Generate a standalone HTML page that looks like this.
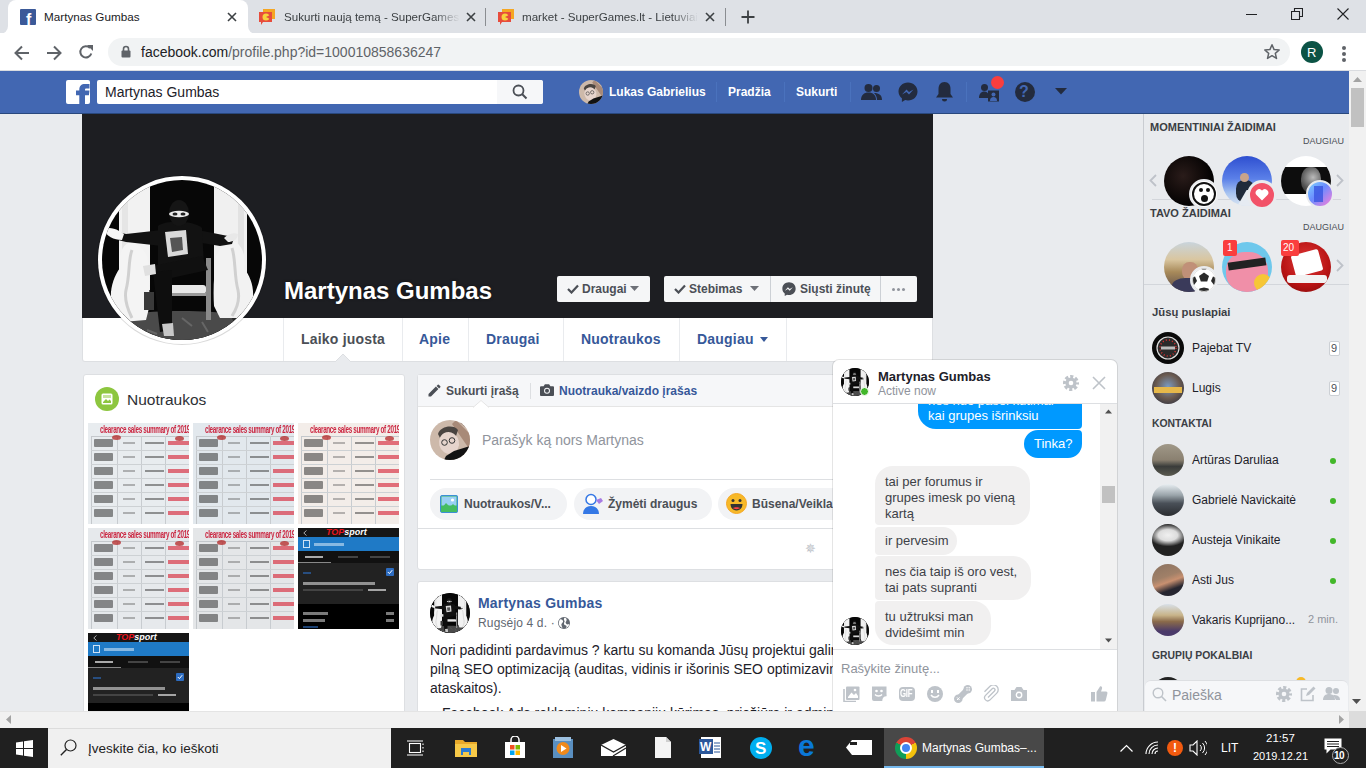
<!DOCTYPE html>
<html><head><meta charset="utf-8">
<style>
*{margin:0;padding:0;box-sizing:border-box}
html,body{width:1366px;height:768px;overflow:hidden;background:#e9ebee;font-family:"Liberation Sans",sans-serif}
.a{position:absolute}
.t{position:absolute;white-space:nowrap;line-height:1}
/* chrome */
#tabs{left:0;top:0;width:1366px;height:33px;background:#dee1e6}
#toolbar{left:0;top:33px;width:1366px;height:38px;background:#fff;border-bottom:1px solid #dadce0}
#omni{left:108px;top:38px;width:1182px;height:28px;border-radius:14px;background:#f1f3f4}
#fbh{left:0;top:71px;width:1349px;height:43px;background:#4267b2;border-bottom:1px solid #29487d}
#vscroll{left:1349px;top:71px;width:17px;height:640px;background:#f1f1f1}
#hscroll{left:0;top:711px;width:1366px;height:17px;background:#f1f1f1;border-top:1px solid #e4e4e4}
#taskbar{left:0;top:728px;width:1366px;height:40px;background:#202020}
.card{position:absolute;background:#fff;border:1px solid #dddfe2;border-radius:3px}
.hdr{color:#fff;font-weight:bold;font-size:14px}
</style></head><body>
<svg width="0" height="0" style="position:absolute"><defs><clipPath id="pc"><circle cx="80" cy="80" r="80"/></clipPath>
  <linearGradient id="pl" x1="0" x2="1"><stop offset="0" stop-color="#d8d8d8"/><stop offset=".4" stop-color="#fafafa"/><stop offset="1" stop-color="#e2e2e2"/></linearGradient>
  <linearGradient id="fl" x1="0" y1="0" x2="0" y2="1"><stop offset="0" stop-color="#151515"/><stop offset=".6" stop-color="#3a3a3a"/><stop offset="1" stop-color="#555"/></linearGradient></defs><symbol id="pp" viewBox="0 0 160 160">
  <g clip-path="url(#pc)">
    <rect width="160" height="160" fill="#070707"/>
    <rect x="17" y="0" width="31" height="110" fill="#f2f2f2"/>
    <rect x="112" y="0" width="33" height="100" fill="#f0f0f0"/>
    <rect x="20" y="0" width="6" height="100" fill="#dcdcdc" opacity=".6"/>
    <rect x="136" y="0" width="6" height="95" fill="#d8d8d8" opacity=".6"/>
    <path d="M0 134H160V160H0Z" fill="#2a2a2a"/>
    <path d="M30 134C50 130 110 130 128 134L140 160H20Z" fill="#4a4a4a"/>
    <path d="M60 140l8 6M80 138l10 8M100 142l6 10M45 150l10 4" stroke="#666" stroke-width="2"/>
    <path d="M9 120C8 108 12 96 18 88C15 78 20 66 26 63C36 62 44 70 46 80C47 96 48 112 47 128L44 140L20 142C14 136 10 128 9 120Z" fill="#f4f4f4"/>
    <path d="M30 70C26 80 28 96 24 110C22 120 26 130 30 138" stroke="#d0d0d0" stroke-width="3" fill="none"/>
    <path d="M151 118C152 106 148 96 142 88C145 78 140 66 134 62C124 61 116 68 114 78C112 94 111 110 112 126L118 138L140 138C146 132 150 126 151 118Z" fill="#f2f2f2"/>
    <path d="M130 68C134 80 132 96 136 110C138 120 134 130 130 136" stroke="#d0d0d0" stroke-width="3" fill="none"/>
    <rect x="66" y="105" width="38" height="9" rx="3" fill="#e8e8e8"/>
    <rect x="66" y="113" width="38" height="3" fill="#9a9a9a"/>
    <rect x="104" y="78" width="5" height="62" fill="#8a8a8a"/>
    <rect x="42" y="112" width="10" height="18" fill="#3a3a3a"/>
    <path d="M8 50L24 54L60 50L96 50L126 56L132 58L130 64L118 66L94 62L60 66L24 62L8 58Z" fill="#121212"/>
    <path d="M2 50C6 46 14 48 22 54L20 60C12 60 4 56 2 50Z" fill="#f6f6f6"/>
    <path d="M136 54C132 52 126 54 122 58L126 62C130 62 136 60 136 54Z" fill="#e8e8e8"/>
    <path d="M56 46C62 40 92 40 100 48L102 86C90 92 66 92 56 86Z" fill="#121212"/>
    <path d="M63 52L84 50L86 74L66 77Z" fill="#dadada"/>
    <path d="M68 58L80 57L81 70L70 72Z" fill="#555"/>
    <ellipse cx="77" cy="33" rx="10" ry="13" fill="#151515"/>
    <ellipse cx="77" cy="34" rx="10" ry="3.2" fill="#ececec"/>
    <ellipse cx="73" cy="34" rx="2.5" ry="1.5" fill="#222"/>
    <ellipse cx="81" cy="34" rx="2.5" ry="1.5" fill="#222"/>
    <path d="M50 86L100 76L106 90L60 100Z" fill="#101010"/>
    <path d="M51 92L70 90L70 150L58 152Z" fill="#0e0e0e"/>
    <path d="M41 86L53 84L54 94L43 96Z" fill="#e0e0e0"/>
    <path d="M60 144L71 143L72 156L62 156Z" fill="#c8c8c8"/>
  </g>
</symbol></svg>

<!-- ============ CHROME TAB STRIP ============ -->
<div id="tabs" class="a">
  <div class="a" style="left:8px;top:0;width:240px;height:34px;background:#fff;border-radius:8px 8px 0 0"></div>
  <div class="a" style="left:0;top:26px;width:8px;height:8px;background:#fff"></div>
  <div class="a" style="left:0;top:24px;width:8px;height:10px;background:#dee1e6;border-radius:0 0 8px 0"></div>
  <div class="a" style="left:248px;top:26px;width:8px;height:8px;background:#fff"></div>
  <div class="a" style="left:248px;top:24px;width:8px;height:10px;background:#dee1e6;border-radius:0 0 0 8px"></div>
  <!-- fb favicon -->
  <div class="a" style="left:20px;top:9px;width:16px;height:16px;background:#3b5998;border-radius:1px;overflow:hidden">
    <div class="t" style="left:6px;top:3px;color:#fff;font-weight:bold;font-size:16px;">f</div>
  </div>
  <div class="t" style="left:44px;top:11px;font-size:11.7px;color:#202124">Martynas Gumbas</div>
  <svg class="a" style="left:227px;top:12px" width="10" height="10" viewBox="0 0 10 10"><path d="M1 1L9 9M9 1L1 9" stroke="#3c4043" stroke-width="1.6"/></svg>
  <!-- tab 2 -->
  <svg class="a" style="left:259px;top:9px" width="17" height="17" viewBox="0 0 17 17"><rect x="4" y="0" width="12" height="10" fill="#f5a623"/><path d="M0 3h13v10H4l-2 3v-3H0z" fill="#e74c3c"/><circle cx="7" cy="8" r="3.5" fill="#f7d13d"/><path d="M7 8L11 6L11 10Z" fill="#e74c3c"/></svg>
  <div class="t" style="left:284px;top:11px;width:176px;overflow:hidden;font-size:11.6px;color:#3c4043;-webkit-mask-image:linear-gradient(90deg,#000 85%,transparent)">Sukurti naują temą - SuperGames.lt</div>
  <svg class="a" style="left:466px;top:12px" width="10" height="10" viewBox="0 0 10 10"><path d="M1 1L9 9M9 1L1 9" stroke="#3c4043" stroke-width="1.6"/></svg>
  <div class="a" style="left:485px;top:8px;width:1px;height:18px;background:#8a8d91"></div>
  <!-- tab 3 -->
  <svg class="a" style="left:498px;top:9px" width="17" height="17" viewBox="0 0 17 17"><rect x="4" y="0" width="12" height="10" fill="#f5a623"/><path d="M0 3h13v10H4l-2 3v-3H0z" fill="#e74c3c"/><circle cx="7" cy="8" r="3.5" fill="#f7d13d"/><path d="M7 8L11 6L11 10Z" fill="#e74c3c"/></svg>
  <div class="t" style="left:522px;top:11px;width:176px;overflow:hidden;font-size:11.6px;color:#3c4043;-webkit-mask-image:linear-gradient(90deg,#000 85%,transparent)">market - SuperGames.lt - Lietuviai</div>
  <svg class="a" style="left:705px;top:12px" width="10" height="10" viewBox="0 0 10 10"><path d="M1 1L9 9M9 1L1 9" stroke="#3c4043" stroke-width="1.6"/></svg>
  <div class="a" style="left:725px;top:8px;width:1px;height:18px;background:#8a8d91"></div>
  <svg class="a" style="left:741px;top:10px" width="14" height="14" viewBox="0 0 14 14"><path d="M7 0.5V13.5M0.5 7H13.5" stroke="#3c4043" stroke-width="1.8"/></svg>
  <!-- window controls -->
  <div class="a" style="left:1246px;top:14px;width:11px;height:1px;background:#202124"></div>
  <svg class="a" style="left:1291px;top:8px" width="12" height="12" viewBox="0 0 12 12"><path d="M0.5 3.5h8v8h-8z M3.5 3.5V0.5h8v8h-3" fill="none" stroke="#202124" stroke-width="1.1"/></svg>
  <svg class="a" style="left:1337px;top:8px" width="12" height="12" viewBox="0 0 12 12"><path d="M0.5 0.5L11.5 11.5M11.5 0.5L0.5 11.5" stroke="#202124" stroke-width="1.1"/></svg>
</div>

<!-- ============ TOOLBAR ============ -->
<div id="toolbar" class="a"></div>
<svg class="a" style="left:14px;top:45px" width="16" height="16" viewBox="0 0 16 16"><path d="M15 8H2M8 1.5L1.5 8L8 14.5" fill="none" stroke="#5f6368" stroke-width="2"/></svg>
<svg class="a" style="left:46px;top:45px" width="16" height="16" viewBox="0 0 16 16"><path d="M1 8H14M8 1.5L14.5 8L8 14.5" fill="none" stroke="#5f6368" stroke-width="2"/></svg>
<svg class="a" style="left:78px;top:44px" width="16" height="16" viewBox="0 0 16 16"><path d="M13.3 9.5A5.6 5.6 0 1 1 12 4" fill="none" stroke="#5f6368" stroke-width="2"/><path d="M9 1H15V7Z" fill="#5f6368"/></svg>
<div id="omni" class="a"></div>
<svg class="a" style="left:121px;top:45px" width="10" height="13" viewBox="0 0 10 13"><path d="M2.5 6V4a2.5 2.5 0 0 1 5 0v2" fill="none" stroke="#5f6368" stroke-width="1.6"/><rect x="0.5" y="5.5" width="9" height="7" rx="1" fill="#5f6368"/></svg>
<div class="t" style="left:141px;top:45px;font-size:14px;color:#202124">facebook.com<span style="color:#5f6368">/profile.php?id=100010858636247</span></div>
<svg class="a" style="left:1263px;top:43px" width="18" height="18" viewBox="0 0 18 18"><path d="M9 1.8L11.1 6.6L16.2 7L12.3 10.4L13.5 15.4L9 12.7L4.5 15.4L5.7 10.4L1.8 7L6.9 6.6Z" fill="none" stroke="#5f6368" stroke-width="1.5" stroke-linejoin="round"/></svg>
<div class="a" style="left:1301px;top:41px;width:22px;height:22px;border-radius:50%;background:#0b5345"></div>
<div class="t" style="left:1307px;top:46px;font-size:13px;color:#fff">R</div>
<div class="a" style="left:1342px;top:46px;width:4px;height:4px;border-radius:50%;background:#5f6368;box-shadow:0 6px 0 #5f6368,0 12px 0 #5f6368"></div>

<!-- ============ FB HEADER ============ -->
<div id="fbh" class="a"></div>
<svg class="a" style="left:66px;top:80px" width="24" height="24" viewBox="0 0 24 24"><rect width="24" height="24" rx="2" fill="#fff"/><path d="M13.3 24V9.8C13.3 6 15.3 4 19 4H23.5V8.6H20.3C19.5 8.6 19 9.1 19 10V24Z M10 10.4H23.5L22.9 15.2H10Z" fill="#4267b2"/></svg>
<div class="a" style="left:97px;top:80px;width:446px;height:24px;background:#fff;border-radius:2px 3px 3px 2px"></div>
<div class="a" style="left:497px;top:80px;width:46px;height:24px;background:#f6f7f9;border-radius:0 2px 2px 0"></div>
<svg class="a" style="left:512px;top:84px" width="16" height="16" viewBox="0 0 16 16"><circle cx="6.5" cy="6.5" r="5" fill="none" stroke="#4b4f56" stroke-width="1.8"/><path d="M10 10L14.5 14.5" stroke="#4b4f56" stroke-width="2"/></svg>
<div class="t" style="left:105px;top:85px;font-size:14px;color:#1d2129">Martynas Gumbas</div>
<!-- lukas avatar -->
<svg class="a" style="left:579px;top:80px" width="24" height="24" viewBox="0 0 40 40"><defs><clipPath id="ca2"><circle cx="20" cy="20" r="20"/></clipPath></defs><g clip-path="url(#ca2)"><rect width="40" height="40" fill="#cdb9aa"/><path d="M26 0L40 14V30L22 4Z" fill="#a88a78"/><path d="M30 2L40 10M33 0L40 6" stroke="#8a6e60" stroke-width="1.5"/><path d="M8 14C10 6 24 4 28 10L26 16L10 18Z" fill="#4a4440"/><ellipse cx="19" cy="23" rx="10" ry="11" fill="#e6d4cc" transform="rotate(-15 19 23)"/><circle cx="14.5" cy="22.5" r="2.8" fill="none" stroke="#333" stroke-width="1"/><circle cx="22" cy="20.5" r="2.8" fill="none" stroke="#333" stroke-width="1"/><path d="M16 36L24 31L40 26V40H14Z" fill="#121212"/></g></svg>
<div class="t hdr" style="left:609px;top:86px;font-size:12px">Lukas Gabrielius</div>
<div class="a" style="left:716px;top:82px;width:1px;height:20px;background:#4a72bd"></div>
<div class="t hdr" style="left:728px;top:86px;font-size:12px">Pradžia</div>
<div class="a" style="left:784px;top:82px;width:1px;height:20px;background:#4a72bd"></div>
<div class="t hdr" style="left:796px;top:86px;font-size:12px">Sukurti</div>
<div class="a" style="left:850px;top:82px;width:1px;height:20px;background:#4a72bd"></div>
<!-- friends icon -->
<svg class="a" style="left:861px;top:82px" width="22" height="20" viewBox="0 0 22 20"><circle cx="7.5" cy="6" r="4" fill="#1d2129" opacity=".85"/><path d="M0 18c0-5 3-7.5 7.5-7.5S15 13 15 18z" fill="#1d2129" opacity=".85"/><circle cx="15.5" cy="6.5" r="3.5" fill="#1d2129" opacity=".85"/><path d="M13 11c5 0 8 2 8 7h-5c0-3-1-5-3-7z" fill="#1d2129" opacity=".85"/></svg>
<!-- messenger -->
<svg class="a" style="left:898px;top:82px" width="20" height="20" viewBox="0 0 20 20"><path d="M10 0.5C4.5 0.5 0.5 4.5 0.5 9.5c0 2.8 1.3 5.2 3.4 6.8V20l3.3-1.9c0.9 0.3 1.8 0.4 2.8 0.4 5.5 0 9.5-4 9.5-9S15.5 0.5 10 0.5z" fill="#1d2129" opacity=".85"/><path d="M4 12.5L8.5 7.5L11 10L15.5 7.5L11 12.5L8.5 10Z" fill="#4267b2"/></svg>
<!-- bell -->
<svg class="a" style="left:935px;top:81px" width="19" height="21" viewBox="0 0 19 21"><path d="M9.5 1C5.5 1 3.5 4 3.5 8v5L1 16.5h17L15.5 13V8C15.5 4 13.5 1 9.5 1z" fill="#1d2129" opacity=".85"/><path d="M7 18a2.5 2.5 0 0 0 5 0z" fill="#1d2129" opacity=".85"/></svg>
<div class="a" style="left:966px;top:82px;width:1px;height:20px;background:#4a72bd"></div>
<!-- friend requests -->
<svg class="a" style="left:979px;top:82px" width="21" height="20" viewBox="0 0 21 20"><circle cx="5.5" cy="5.5" r="3.5" fill="#1d2129" opacity=".85"/><path d="M0 16c0-4 2-6.5 5.5-6.5 2 0 3 1 3.5 2V16z" fill="#1d2129" opacity=".85"/><rect x="9" y="8.5" width="11" height="11" fill="#1d2129" opacity=".85"/><circle cx="14.5" cy="12.5" r="2" fill="#4267b2"/><path d="M11 19c0-3 1.5-4 3.5-4s3.5 1 3.5 4z" fill="#4267b2"/></svg>
<div class="a" style="left:991px;top:76px;width:13px;height:13px;border-radius:50%;background:#fa3e3e"></div>
<!-- help -->
<div class="a" style="left:1015px;top:82px;width:20px;height:20px;border-radius:50%;background:#1d2129;opacity:.85"></div>
<div class="t" style="left:1019px;top:84px;font-size:16px;font-weight:bold;color:#4267b2">?</div>
<svg class="a" style="left:1055px;top:88px" width="12" height="7" viewBox="0 0 12 7"><path d="M0 0H12L6 6.5Z" fill="#1d2129" opacity=".85"/></svg>

<!-- ============ PAGE ============ -->
<!-- cover -->
<div class="a" style="left:82px;top:114px;width:851px;height:204px;background:#1d1e22"></div>
<div class="a" style="left:82px;top:318px;width:851px;height:44px;background:#fff;border:1px solid #dddfe2;border-top:0;border-radius:0 0 3px 3px"></div>
<!-- profile pic -->
<div class="a" style="left:98px;top:176px;width:168px;height:168px;border-radius:50%;background:#fff;box-shadow:0 0 0 1px rgba(0,0,0,.15)"></div>
<svg class="a" style="left:102px;top:180px" width="160" height="160"><use href="#pp"/></svg>
<div class="t" style="left:284px;top:279px;font-size:24px;font-weight:bold;color:#fff;text-shadow:0 0 3px rgba(0,0,0,.5)">Martynas Gumbas</div>
<!-- buttons -->
<div class="a" style="left:557px;top:276px;width:93px;height:26px;background:#f5f6f7;border-radius:2px"></div>
<div class="a" style="left:664px;top:276px;width:253px;height:26px;background:#f5f6f7;border-radius:2px"></div>
<div class="a" style="left:770px;top:276px;width:1px;height:26px;background:#ccd0d5"></div>
<div class="a" style="left:880px;top:276px;width:1px;height:26px;background:#ccd0d5"></div>
<svg class="a" style="left:567px;top:284px" width="12" height="10" viewBox="0 0 12 10"><path d="M1 5L4.5 8.5L11 1.5" fill="none" stroke="#4b4f56" stroke-width="2.2"/></svg>
<div class="t" style="left:582px;top:283px;font-size:12px;font-weight:bold;color:#4b4f56">Draugai</div>
<svg class="a" style="left:630px;top:286px" width="9" height="5" viewBox="0 0 9 5"><path d="M0 0H9L4.5 5Z" fill="#4b4f56" opacity=".8"/></svg>
<svg class="a" style="left:674px;top:284px" width="12" height="10" viewBox="0 0 12 10"><path d="M1 5L4.5 8.5L11 1.5" fill="none" stroke="#4b4f56" stroke-width="2.2"/></svg>
<div class="t" style="left:689px;top:283px;font-size:12px;font-weight:bold;color:#4b4f56">Stebimas</div>
<svg class="a" style="left:750px;top:286px" width="9" height="5" viewBox="0 0 9 5"><path d="M0 0H9L4.5 5Z" fill="#4b4f56" opacity=".8"/></svg>
<svg class="a" style="left:782px;top:282px" width="14" height="14" viewBox="0 0 20 20"><path d="M10 0.5C4.5 0.5 0.5 4.5 0.5 9.5c0 2.8 1.3 5.2 3.4 6.8V20l3.3-1.9c0.9 0.3 1.8 0.4 2.8 0.4 5.5 0 9.5-4 9.5-9S15.5 0.5 10 0.5z" fill="#4b4f56"/><path d="M4 12.5L8.5 7.5L11 10L15.5 7.5L11 12.5L8.5 10Z" fill="#f5f6f7"/></svg>
<div class="t" style="left:800px;top:283px;font-size:12px;font-weight:bold;color:#4b4f56">Siųsti žinutę</div>
<div class="a" style="left:892px;top:288px;width:3px;height:3px;border-radius:50%;background:#90949c;box-shadow:5px 0 0 #90949c,10px 0 0 #90949c"></div>
<!-- nav -->
<div class="a" style="left:283px;top:318px;width:1px;height:43px;background:#e9ebee"></div>
<div class="a" style="left:402px;top:318px;width:1px;height:43px;background:#e9ebee"></div>
<div class="a" style="left:468px;top:318px;width:1px;height:43px;background:#e9ebee"></div>
<div class="a" style="left:563px;top:318px;width:1px;height:43px;background:#e9ebee"></div>
<div class="a" style="left:679px;top:318px;width:1px;height:43px;background:#e9ebee"></div>
<div class="a" style="left:786px;top:318px;width:1px;height:43px;background:#e9ebee"></div>
<div class="t" style="left:301px;top:332px;font-size:14px;font-weight:bold;letter-spacing:.2px;color:#4b4f56">Laiko juosta</div>
<div class="t" style="left:419px;top:332px;font-size:14px;font-weight:bold;letter-spacing:.2px;color:#365899">Apie</div>
<div class="t" style="left:486px;top:332px;font-size:14px;font-weight:bold;letter-spacing:.2px;color:#365899">Draugai</div>
<div class="t" style="left:581px;top:332px;font-size:14px;font-weight:bold;letter-spacing:.2px;color:#365899">Nuotraukos</div>
<div class="t" style="left:697px;top:332px;font-size:14px;font-weight:bold;letter-spacing:.2px;color:#365899">Daugiau</div>
<svg class="a" style="left:760px;top:337px" width="8" height="5" viewBox="0 0 8 5"><path d="M0 0H8L4 5Z" fill="#365899"/></svg>
<!-- nav arrow notch -->
<svg class="a" style="left:335px;top:353px" width="16" height="9" viewBox="0 0 16 9"><path d="M0 9L8 1L16 9" fill="#e9ebee" stroke="#dddfe2" stroke-width="1"/></svg>

<!-- ============ PHOTOS CARD ============ -->
<div class="card" style="left:83px;top:374px;width:322px;height:346px"></div>
<div class="a" style="left:95px;top:387px;width:24px;height:24px;border-radius:50%;background:#8dc63f"></div>
<svg class="a" style="left:101px;top:393px" width="12" height="12" viewBox="0 0 12 12"><rect x="0.5" y="0.5" width="11" height="11" rx="1.5" fill="#fff"/><path d="M2 9L5 6L7 8L8.5 6.5L10 8V10H2Z" fill="#8dc63f"/><rect x="2" y="2" width="8" height="3" fill="#8dc63f" opacity=".5"/></svg>
<div class="t" style="left:127px;top:392px;font-size:15.5px;color:#2e3136">Nuotraukos</div>
<div class="a" style="left:88px;top:423px;width:101px;height:101px;overflow:hidden;background:#e8ecef"><div class="t" style="left:12px;top:2px;font-size:10px;font-weight:bold;color:#c8102e;letter-spacing:-.5px;transform:scaleX(.63);transform-origin:0 0;opacity:.9">clearance sales summary of 2019</div><div class="a" style="left:3px;top:13px;width:100px;height:88px;border-left:1px solid #c4c8cc;border-top:1px solid #c4c8cc"></div><div class="a" style="left:29px;top:13px;width:1px;height:88px;background:#c8ccd0"></div><div class="a" style="left:53px;top:13px;width:1px;height:88px;background:#c8ccd0"></div><div class="a" style="left:77px;top:13px;width:1px;height:88px;background:#c8ccd0"></div><div class="a" style="left:3px;top:27px;width:98px;height:1px;background:#cdd1d4"></div><div class="a" style="left:3px;top:41px;width:98px;height:1px;background:#cdd1d4"></div><div class="a" style="left:3px;top:55px;width:98px;height:1px;background:#cdd1d4"></div><div class="a" style="left:3px;top:69px;width:98px;height:1px;background:#cdd1d4"></div><div class="a" style="left:3px;top:83px;width:98px;height:1px;background:#cdd1d4"></div><div class="a" style="left:6px;top:16px;width:19px;height:8px;background:#222;opacity:.5;border-radius:1px"></div><div class="a" style="left:35px;top:19px;width:12px;height:2px;background:#555;opacity:.4"></div><div class="a" style="left:57px;top:19px;width:19px;height:2px;background:#333;opacity:.5"></div><div class="a" style="left:80px;top:18px;width:22px;height:4px;background:#d83848;opacity:.7"></div><div class="a" style="left:6px;top:30px;width:19px;height:8px;background:#222;opacity:.5;border-radius:1px"></div><div class="a" style="left:35px;top:33px;width:12px;height:2px;background:#555;opacity:.4"></div><div class="a" style="left:57px;top:33px;width:19px;height:2px;background:#333;opacity:.5"></div><div class="a" style="left:80px;top:32px;width:22px;height:4px;background:#d83848;opacity:.7"></div><div class="a" style="left:6px;top:44px;width:19px;height:8px;background:#222;opacity:.5;border-radius:1px"></div><div class="a" style="left:35px;top:47px;width:12px;height:2px;background:#555;opacity:.4"></div><div class="a" style="left:57px;top:47px;width:19px;height:2px;background:#333;opacity:.5"></div><div class="a" style="left:80px;top:46px;width:22px;height:4px;background:#d83848;opacity:.7"></div><div class="a" style="left:6px;top:58px;width:19px;height:8px;background:#222;opacity:.5;border-radius:1px"></div><div class="a" style="left:35px;top:61px;width:12px;height:2px;background:#555;opacity:.4"></div><div class="a" style="left:57px;top:61px;width:19px;height:2px;background:#333;opacity:.5"></div><div class="a" style="left:80px;top:60px;width:22px;height:4px;background:#d83848;opacity:.7"></div><div class="a" style="left:6px;top:72px;width:19px;height:8px;background:#222;opacity:.5;border-radius:1px"></div><div class="a" style="left:35px;top:75px;width:12px;height:2px;background:#555;opacity:.4"></div><div class="a" style="left:57px;top:75px;width:19px;height:2px;background:#333;opacity:.5"></div><div class="a" style="left:80px;top:74px;width:22px;height:4px;background:#d83848;opacity:.7"></div><div class="a" style="left:6px;top:86px;width:19px;height:8px;background:#222;opacity:.5;border-radius:1px"></div><div class="a" style="left:35px;top:89px;width:12px;height:2px;background:#555;opacity:.4"></div><div class="a" style="left:57px;top:89px;width:19px;height:2px;background:#333;opacity:.5"></div><div class="a" style="left:80px;top:88px;width:22px;height:4px;background:#d83848;opacity:.7"></div><div class="a" style="left:24px;top:12px;width:9px;height:5px;background:#b01818;border-radius:50%;opacity:.7"></div><div class="a" style="left:87px;top:13px;width:9px;height:5px;background:#b01818;border-radius:50%;opacity:.7"></div></div><div class="a" style="left:193px;top:423px;width:101px;height:101px;overflow:hidden;background:#e2e8ed"><div class="t" style="left:12px;top:2px;font-size:10px;font-weight:bold;color:#c8102e;letter-spacing:-.5px;transform:scaleX(.63);transform-origin:0 0;opacity:.9">clearance sales summary of 2019</div><div class="a" style="left:3px;top:13px;width:100px;height:88px;border-left:1px solid #c4c8cc;border-top:1px solid #c4c8cc"></div><div class="a" style="left:29px;top:13px;width:1px;height:88px;background:#c8ccd0"></div><div class="a" style="left:53px;top:13px;width:1px;height:88px;background:#c8ccd0"></div><div class="a" style="left:77px;top:13px;width:1px;height:88px;background:#c8ccd0"></div><div class="a" style="left:3px;top:27px;width:98px;height:1px;background:#cdd1d4"></div><div class="a" style="left:3px;top:41px;width:98px;height:1px;background:#cdd1d4"></div><div class="a" style="left:3px;top:55px;width:98px;height:1px;background:#cdd1d4"></div><div class="a" style="left:3px;top:69px;width:98px;height:1px;background:#cdd1d4"></div><div class="a" style="left:3px;top:83px;width:98px;height:1px;background:#cdd1d4"></div><div class="a" style="left:6px;top:16px;width:19px;height:8px;background:#222;opacity:.5;border-radius:1px"></div><div class="a" style="left:35px;top:19px;width:12px;height:2px;background:#555;opacity:.4"></div><div class="a" style="left:57px;top:19px;width:19px;height:2px;background:#333;opacity:.5"></div><div class="a" style="left:80px;top:18px;width:22px;height:4px;background:#d83848;opacity:.7"></div><div class="a" style="left:6px;top:30px;width:19px;height:8px;background:#222;opacity:.5;border-radius:1px"></div><div class="a" style="left:35px;top:33px;width:12px;height:2px;background:#555;opacity:.4"></div><div class="a" style="left:57px;top:33px;width:19px;height:2px;background:#333;opacity:.5"></div><div class="a" style="left:80px;top:32px;width:22px;height:4px;background:#d83848;opacity:.7"></div><div class="a" style="left:6px;top:44px;width:19px;height:8px;background:#222;opacity:.5;border-radius:1px"></div><div class="a" style="left:35px;top:47px;width:12px;height:2px;background:#555;opacity:.4"></div><div class="a" style="left:57px;top:47px;width:19px;height:2px;background:#333;opacity:.5"></div><div class="a" style="left:80px;top:46px;width:22px;height:4px;background:#d83848;opacity:.7"></div><div class="a" style="left:6px;top:58px;width:19px;height:8px;background:#222;opacity:.5;border-radius:1px"></div><div class="a" style="left:35px;top:61px;width:12px;height:2px;background:#555;opacity:.4"></div><div class="a" style="left:57px;top:61px;width:19px;height:2px;background:#333;opacity:.5"></div><div class="a" style="left:80px;top:60px;width:22px;height:4px;background:#d83848;opacity:.7"></div><div class="a" style="left:6px;top:72px;width:19px;height:8px;background:#222;opacity:.5;border-radius:1px"></div><div class="a" style="left:35px;top:75px;width:12px;height:2px;background:#555;opacity:.4"></div><div class="a" style="left:57px;top:75px;width:19px;height:2px;background:#333;opacity:.5"></div><div class="a" style="left:80px;top:74px;width:22px;height:4px;background:#d83848;opacity:.7"></div><div class="a" style="left:6px;top:86px;width:19px;height:8px;background:#222;opacity:.5;border-radius:1px"></div><div class="a" style="left:35px;top:89px;width:12px;height:2px;background:#555;opacity:.4"></div><div class="a" style="left:57px;top:89px;width:19px;height:2px;background:#333;opacity:.5"></div><div class="a" style="left:80px;top:88px;width:22px;height:4px;background:#d83848;opacity:.7"></div><div class="a" style="left:24px;top:12px;width:9px;height:5px;background:#b01818;border-radius:50%;opacity:.7"></div><div class="a" style="left:87px;top:13px;width:9px;height:5px;background:#b01818;border-radius:50%;opacity:.7"></div></div><div class="a" style="left:298px;top:423px;width:101px;height:101px;overflow:hidden;background:#f3ede9"><div class="t" style="left:12px;top:2px;font-size:10px;font-weight:bold;color:#c8102e;letter-spacing:-.5px;transform:scaleX(.63);transform-origin:0 0;opacity:.9">clearance sales summary of 2019</div><div class="a" style="left:3px;top:13px;width:100px;height:88px;border-left:1px solid #c4c8cc;border-top:1px solid #c4c8cc"></div><div class="a" style="left:29px;top:13px;width:1px;height:88px;background:#c8ccd0"></div><div class="a" style="left:53px;top:13px;width:1px;height:88px;background:#c8ccd0"></div><div class="a" style="left:77px;top:13px;width:1px;height:88px;background:#c8ccd0"></div><div class="a" style="left:3px;top:27px;width:98px;height:1px;background:#cdd1d4"></div><div class="a" style="left:3px;top:41px;width:98px;height:1px;background:#cdd1d4"></div><div class="a" style="left:3px;top:55px;width:98px;height:1px;background:#cdd1d4"></div><div class="a" style="left:3px;top:69px;width:98px;height:1px;background:#cdd1d4"></div><div class="a" style="left:3px;top:83px;width:98px;height:1px;background:#cdd1d4"></div><div class="a" style="left:6px;top:16px;width:19px;height:8px;background:#222;opacity:.5;border-radius:1px"></div><div class="a" style="left:35px;top:19px;width:12px;height:2px;background:#555;opacity:.4"></div><div class="a" style="left:57px;top:19px;width:19px;height:2px;background:#333;opacity:.5"></div><div class="a" style="left:80px;top:18px;width:22px;height:4px;background:#d83848;opacity:.7"></div><div class="a" style="left:6px;top:30px;width:19px;height:8px;background:#222;opacity:.5;border-radius:1px"></div><div class="a" style="left:35px;top:33px;width:12px;height:2px;background:#555;opacity:.4"></div><div class="a" style="left:57px;top:33px;width:19px;height:2px;background:#333;opacity:.5"></div><div class="a" style="left:80px;top:32px;width:22px;height:4px;background:#d83848;opacity:.7"></div><div class="a" style="left:6px;top:44px;width:19px;height:8px;background:#222;opacity:.5;border-radius:1px"></div><div class="a" style="left:35px;top:47px;width:12px;height:2px;background:#555;opacity:.4"></div><div class="a" style="left:57px;top:47px;width:19px;height:2px;background:#333;opacity:.5"></div><div class="a" style="left:80px;top:46px;width:22px;height:4px;background:#d83848;opacity:.7"></div><div class="a" style="left:6px;top:58px;width:19px;height:8px;background:#222;opacity:.5;border-radius:1px"></div><div class="a" style="left:35px;top:61px;width:12px;height:2px;background:#555;opacity:.4"></div><div class="a" style="left:57px;top:61px;width:19px;height:2px;background:#333;opacity:.5"></div><div class="a" style="left:80px;top:60px;width:22px;height:4px;background:#d83848;opacity:.7"></div><div class="a" style="left:6px;top:72px;width:19px;height:8px;background:#222;opacity:.5;border-radius:1px"></div><div class="a" style="left:35px;top:75px;width:12px;height:2px;background:#555;opacity:.4"></div><div class="a" style="left:57px;top:75px;width:19px;height:2px;background:#333;opacity:.5"></div><div class="a" style="left:80px;top:74px;width:22px;height:4px;background:#d83848;opacity:.7"></div><div class="a" style="left:6px;top:86px;width:19px;height:8px;background:#222;opacity:.5;border-radius:1px"></div><div class="a" style="left:35px;top:89px;width:12px;height:2px;background:#555;opacity:.4"></div><div class="a" style="left:57px;top:89px;width:19px;height:2px;background:#333;opacity:.5"></div><div class="a" style="left:80px;top:88px;width:22px;height:4px;background:#d83848;opacity:.7"></div><div class="a" style="left:24px;top:12px;width:9px;height:5px;background:#b01818;border-radius:50%;opacity:.7"></div><div class="a" style="left:87px;top:13px;width:9px;height:5px;background:#b01818;border-radius:50%;opacity:.7"></div></div><div class="a" style="left:88px;top:528px;width:101px;height:101px;overflow:hidden;background:#e6e9ec"><div class="t" style="left:12px;top:2px;font-size:10px;font-weight:bold;color:#c8102e;letter-spacing:-.5px;transform:scaleX(.63);transform-origin:0 0;opacity:.9">clearance sales summary of 2019</div><div class="a" style="left:3px;top:13px;width:100px;height:88px;border-left:1px solid #c4c8cc;border-top:1px solid #c4c8cc"></div><div class="a" style="left:29px;top:13px;width:1px;height:88px;background:#c8ccd0"></div><div class="a" style="left:53px;top:13px;width:1px;height:88px;background:#c8ccd0"></div><div class="a" style="left:77px;top:13px;width:1px;height:88px;background:#c8ccd0"></div><div class="a" style="left:3px;top:27px;width:98px;height:1px;background:#cdd1d4"></div><div class="a" style="left:3px;top:41px;width:98px;height:1px;background:#cdd1d4"></div><div class="a" style="left:3px;top:55px;width:98px;height:1px;background:#cdd1d4"></div><div class="a" style="left:3px;top:69px;width:98px;height:1px;background:#cdd1d4"></div><div class="a" style="left:3px;top:83px;width:98px;height:1px;background:#cdd1d4"></div><div class="a" style="left:6px;top:16px;width:19px;height:8px;background:#222;opacity:.5;border-radius:1px"></div><div class="a" style="left:35px;top:19px;width:12px;height:2px;background:#555;opacity:.4"></div><div class="a" style="left:57px;top:19px;width:19px;height:2px;background:#333;opacity:.5"></div><div class="a" style="left:80px;top:18px;width:22px;height:4px;background:#d83848;opacity:.7"></div><div class="a" style="left:6px;top:30px;width:19px;height:8px;background:#222;opacity:.5;border-radius:1px"></div><div class="a" style="left:35px;top:33px;width:12px;height:2px;background:#555;opacity:.4"></div><div class="a" style="left:57px;top:33px;width:19px;height:2px;background:#333;opacity:.5"></div><div class="a" style="left:80px;top:32px;width:22px;height:4px;background:#d83848;opacity:.7"></div><div class="a" style="left:6px;top:44px;width:19px;height:8px;background:#222;opacity:.5;border-radius:1px"></div><div class="a" style="left:35px;top:47px;width:12px;height:2px;background:#555;opacity:.4"></div><div class="a" style="left:57px;top:47px;width:19px;height:2px;background:#333;opacity:.5"></div><div class="a" style="left:80px;top:46px;width:22px;height:4px;background:#d83848;opacity:.7"></div><div class="a" style="left:6px;top:58px;width:19px;height:8px;background:#222;opacity:.5;border-radius:1px"></div><div class="a" style="left:35px;top:61px;width:12px;height:2px;background:#555;opacity:.4"></div><div class="a" style="left:57px;top:61px;width:19px;height:2px;background:#333;opacity:.5"></div><div class="a" style="left:80px;top:60px;width:22px;height:4px;background:#d83848;opacity:.7"></div><div class="a" style="left:6px;top:72px;width:19px;height:8px;background:#222;opacity:.5;border-radius:1px"></div><div class="a" style="left:35px;top:75px;width:12px;height:2px;background:#555;opacity:.4"></div><div class="a" style="left:57px;top:75px;width:19px;height:2px;background:#333;opacity:.5"></div><div class="a" style="left:80px;top:74px;width:22px;height:4px;background:#d83848;opacity:.7"></div><div class="a" style="left:6px;top:86px;width:19px;height:8px;background:#222;opacity:.5;border-radius:1px"></div><div class="a" style="left:35px;top:89px;width:12px;height:2px;background:#555;opacity:.4"></div><div class="a" style="left:57px;top:89px;width:19px;height:2px;background:#333;opacity:.5"></div><div class="a" style="left:80px;top:88px;width:22px;height:4px;background:#d83848;opacity:.7"></div><div class="a" style="left:24px;top:12px;width:9px;height:5px;background:#b01818;border-radius:50%;opacity:.7"></div><div class="a" style="left:87px;top:13px;width:9px;height:5px;background:#b01818;border-radius:50%;opacity:.7"></div></div><div class="a" style="left:193px;top:528px;width:101px;height:101px;overflow:hidden;background:#e4e6e8"><div class="t" style="left:12px;top:2px;font-size:10px;font-weight:bold;color:#c8102e;letter-spacing:-.5px;transform:scaleX(.63);transform-origin:0 0;opacity:.9">clearance sales summary of 2019</div><div class="a" style="left:3px;top:13px;width:100px;height:88px;border-left:1px solid #c4c8cc;border-top:1px solid #c4c8cc"></div><div class="a" style="left:29px;top:13px;width:1px;height:88px;background:#c8ccd0"></div><div class="a" style="left:53px;top:13px;width:1px;height:88px;background:#c8ccd0"></div><div class="a" style="left:77px;top:13px;width:1px;height:88px;background:#c8ccd0"></div><div class="a" style="left:3px;top:27px;width:98px;height:1px;background:#cdd1d4"></div><div class="a" style="left:3px;top:41px;width:98px;height:1px;background:#cdd1d4"></div><div class="a" style="left:3px;top:55px;width:98px;height:1px;background:#cdd1d4"></div><div class="a" style="left:3px;top:69px;width:98px;height:1px;background:#cdd1d4"></div><div class="a" style="left:3px;top:83px;width:98px;height:1px;background:#cdd1d4"></div><div class="a" style="left:6px;top:16px;width:19px;height:8px;background:#222;opacity:.5;border-radius:1px"></div><div class="a" style="left:35px;top:19px;width:12px;height:2px;background:#555;opacity:.4"></div><div class="a" style="left:57px;top:19px;width:19px;height:2px;background:#333;opacity:.5"></div><div class="a" style="left:80px;top:18px;width:22px;height:4px;background:#d83848;opacity:.7"></div><div class="a" style="left:6px;top:30px;width:19px;height:8px;background:#222;opacity:.5;border-radius:1px"></div><div class="a" style="left:35px;top:33px;width:12px;height:2px;background:#555;opacity:.4"></div><div class="a" style="left:57px;top:33px;width:19px;height:2px;background:#333;opacity:.5"></div><div class="a" style="left:80px;top:32px;width:22px;height:4px;background:#d83848;opacity:.7"></div><div class="a" style="left:6px;top:44px;width:19px;height:8px;background:#222;opacity:.5;border-radius:1px"></div><div class="a" style="left:35px;top:47px;width:12px;height:2px;background:#555;opacity:.4"></div><div class="a" style="left:57px;top:47px;width:19px;height:2px;background:#333;opacity:.5"></div><div class="a" style="left:80px;top:46px;width:22px;height:4px;background:#d83848;opacity:.7"></div><div class="a" style="left:6px;top:58px;width:19px;height:8px;background:#222;opacity:.5;border-radius:1px"></div><div class="a" style="left:35px;top:61px;width:12px;height:2px;background:#555;opacity:.4"></div><div class="a" style="left:57px;top:61px;width:19px;height:2px;background:#333;opacity:.5"></div><div class="a" style="left:80px;top:60px;width:22px;height:4px;background:#d83848;opacity:.7"></div><div class="a" style="left:6px;top:72px;width:19px;height:8px;background:#222;opacity:.5;border-radius:1px"></div><div class="a" style="left:35px;top:75px;width:12px;height:2px;background:#555;opacity:.4"></div><div class="a" style="left:57px;top:75px;width:19px;height:2px;background:#333;opacity:.5"></div><div class="a" style="left:80px;top:74px;width:22px;height:4px;background:#d83848;opacity:.7"></div><div class="a" style="left:6px;top:86px;width:19px;height:8px;background:#222;opacity:.5;border-radius:1px"></div><div class="a" style="left:35px;top:89px;width:12px;height:2px;background:#555;opacity:.4"></div><div class="a" style="left:57px;top:89px;width:19px;height:2px;background:#333;opacity:.5"></div><div class="a" style="left:80px;top:88px;width:22px;height:4px;background:#d83848;opacity:.7"></div><div class="a" style="left:24px;top:12px;width:9px;height:5px;background:#b01818;border-radius:50%;opacity:.7"></div><div class="a" style="left:87px;top:13px;width:9px;height:5px;background:#b01818;border-radius:50%;opacity:.7"></div></div><div class="a" style="left:298px;top:528px;width:101px;height:101px;overflow:hidden;background:#000"><div class="a" style="left:0;top:0;width:101px;height:9px;background:#161616"></div><svg class="a" style="left:5px;top:2px" width="4" height="6" viewBox="0 0 4 6"><path d="M3.5 0.5L0.8 3L3.5 5.5" fill="none" stroke="#aaa" stroke-width="1"/></svg><div class="t" style="left:28px;top:0px;font-size:9px;font-weight:bold;font-style:italic;color:#e8141c">TOP<span style="color:#fff">sport</span></div><div class="a" style="left:0;top:9px;width:101px;height:14px;background:#1f7ac6"></div><div class="a" style="left:5px;top:12px;width:7px;height:8px;border:1px solid #cfe3f5"></div><div class="a" style="left:16px;top:15px;width:30px;height:3px;background:#cfe3f5;opacity:.6"></div><div class="a" style="left:0;top:23px;width:101px;height:12px;background:#111"></div><div class="a" style="left:7px;top:28px;width:18px;height:2px;background:#aaa"></div><div class="a" style="left:40px;top:28px;width:20px;height:2px;background:#444"></div><div class="a" style="left:72px;top:28px;width:20px;height:2px;background:#444"></div><div class="a" style="left:0;top:34px;width:33px;height:1px;background:#888"></div><div class="a" style="left:0;top:35px;width:101px;height:41px;background:#222"></div><div class="a" style="left:88px;top:40px;width:8px;height:8px;background:#2d6cc0;border-radius:1px"></div><svg class="a" style="left:89px;top:41px" width="6" height="6" viewBox="0 0 6 6"><path d="M0.8 3L2.4 4.6L5.2 1.2" fill="none" stroke="#fff" stroke-width="1"/></svg><div class="a" style="left:5px;top:44px;width:8px;height:2px;background:#2d6cc0;opacity:.6"></div><div class="a" style="left:5px;top:54px;width:72px;height:3px;background:#ddd;opacity:.6"></div><div class="a" style="left:5px;top:61px;width:60px;height:2px;background:#666;opacity:.5"></div><div class="a" style="left:70px;top:61px;width:18px;height:2px;background:#ddd;opacity:.7"></div><div class="a" style="left:5px;top:84px;width:25px;height:3px;background:#ccc;opacity:.6"></div><div class="a" style="left:88px;top:84px;width:8px;height:3px;background:#ccc;opacity:.6"></div><div class="a" style="left:5px;top:91px;width:22px;height:3px;background:#ccc;opacity:.6"></div><div class="a" style="left:88px;top:91px;width:8px;height:3px;background:#ccc;opacity:.6"></div><div class="a" style="left:5px;top:98px;width:15px;height:2px;background:#2d6cc0;opacity:.6"></div></div><div class="a" style="left:88px;top:633px;width:101px;height:101px;overflow:hidden;background:#000"><div class="a" style="left:0;top:0;width:101px;height:9px;background:#161616"></div><svg class="a" style="left:5px;top:2px" width="4" height="6" viewBox="0 0 4 6"><path d="M3.5 0.5L0.8 3L3.5 5.5" fill="none" stroke="#aaa" stroke-width="1"/></svg><div class="t" style="left:28px;top:0px;font-size:9px;font-weight:bold;font-style:italic;color:#e8141c">TOP<span style="color:#fff">sport</span></div><div class="a" style="left:0;top:9px;width:101px;height:14px;background:#1f7ac6"></div><div class="a" style="left:5px;top:12px;width:7px;height:8px;border:1px solid #cfe3f5"></div><div class="a" style="left:16px;top:15px;width:30px;height:3px;background:#cfe3f5;opacity:.6"></div><div class="a" style="left:0;top:23px;width:101px;height:12px;background:#111"></div><div class="a" style="left:7px;top:28px;width:18px;height:2px;background:#aaa"></div><div class="a" style="left:40px;top:28px;width:20px;height:2px;background:#444"></div><div class="a" style="left:72px;top:28px;width:20px;height:2px;background:#444"></div><div class="a" style="left:0;top:34px;width:33px;height:1px;background:#888"></div><div class="a" style="left:0;top:35px;width:101px;height:35px;background:#222"></div><div class="a" style="left:88px;top:40px;width:8px;height:8px;background:#2d6cc0;border-radius:1px"></div><svg class="a" style="left:89px;top:41px" width="6" height="6" viewBox="0 0 6 6"><path d="M0.8 3L2.4 4.6L5.2 1.2" fill="none" stroke="#fff" stroke-width="1"/></svg><div class="a" style="left:5px;top:44px;width:8px;height:2px;background:#2d6cc0;opacity:.6"></div><div class="a" style="left:5px;top:54px;width:72px;height:3px;background:#ddd;opacity:.6"></div><div class="a" style="left:5px;top:61px;width:60px;height:2px;background:#666;opacity:.5"></div><div class="a" style="left:70px;top:61px;width:18px;height:2px;background:#ddd;opacity:.7"></div></div>
<!-- ============ COMPOSER ============ -->
<div class="card" style="left:417px;top:374px;width:431px;height:196px"></div>
<div class="a" style="left:418px;top:375px;width:429px;height:32px;background:#f6f7f9;border-bottom:1px solid #e5e5e5"></div>
<svg class="a" style="left:428px;top:384px" width="13" height="13" viewBox="0 0 13 13"><path d="M0.5 10v2.5H3L10.4 5.1 7.9 2.6z M12.3 3.2a.7.7 0 0 0 0-1L10.8.7a.7.7 0 0 0-1 0L8.6 1.9l2.5 2.5z" fill="#4b4f56"/></svg>
<div class="t" style="left:446px;top:385px;font-size:12px;font-weight:bold;color:#4b4f56">Sukurti įrašą</div>
<div class="a" style="left:530px;top:383px;width:1px;height:16px;background:#dddfe2"></div>
<svg class="a" style="left:540px;top:384px" width="14" height="12" viewBox="0 0 14 12"><path d="M0 3.2Q0 2.2 1 2.2h2.6l1.3-2h4.2l1.3 2H13q1 0 1 1V11q0 1-1 1H1q-1 0-1-1z" fill="#4b4f56"/><circle cx="7" cy="6.8" r="3" fill="#f6f7f9"/><circle cx="7" cy="6.8" r="2" fill="#4b4f56"/></svg>
<div class="t" style="left:559px;top:385px;font-size:12px;font-weight:bold;color:#365899">Nuotrauka/vaizdo įrašas</div>
<svg class="a" style="left:473px;top:400px" width="16" height="8" viewBox="0 0 16 8"><path d="M0 7.5L8 0.5L16 7.5" fill="#fff" stroke="#e5e5e5"/></svg>
<div class="a" style="left:474px;top:407px;width:14px;height:2px;background:#fff"></div>
<svg class="a" style="left:430px;top:420px" width="40" height="40" viewBox="0 0 40 40"><defs><clipPath id="ca"><circle cx="20" cy="20" r="20"/></clipPath></defs><g clip-path="url(#ca)"><rect width="40" height="40" fill="#cdb9aa"/><path d="M26 0L40 14V30L22 4Z" fill="#a88a78"/><path d="M30 2L40 10M33 0L40 6" stroke="#8a6e60" stroke-width="1.5"/><path d="M8 14C10 6 24 4 28 10L26 16L10 18Z" fill="#4a4440"/><ellipse cx="19" cy="23" rx="10" ry="11" fill="#e6d4cc" transform="rotate(-15 19 23)"/><circle cx="14.5" cy="22.5" r="2.8" fill="none" stroke="#333" stroke-width="1"/><circle cx="22" cy="20.5" r="2.8" fill="none" stroke="#333" stroke-width="1"/><path d="M16 36L24 31L40 26V40H14Z" fill="#121212"/></g></svg>
<div class="t" style="left:482px;top:433px;font-size:14px;color:#90949c">Parašyk ką nors Martynas</div>
<div class="a" style="left:430px;top:479px;width:418px;height:1px;background:#dddfe2"></div>
<div class="a" style="left:430px;top:488px;width:137px;height:32px;border-radius:16px;background:#f2f3f5"></div>
<div class="a" style="left:574px;top:488px;width:138px;height:32px;border-radius:16px;background:#f2f3f5"></div>
<div class="a" style="left:718px;top:488px;width:138px;height:32px;border-radius:16px;background:#f2f3f5"></div>
<svg class="a" style="left:440px;top:495px" width="18" height="18" viewBox="0 0 18 18"><rect x="0.5" y="0.5" width="17" height="17" rx="2" fill="#45bd62" stroke="#3b8fd6" stroke-width="1.2"/><rect x="1.5" y="1.5" width="15" height="9" fill="#9ad0f5"/><path d="M1 14L6 8L10 12L13 9L17 13V17H1Z" fill="#45bd62"/><circle cx="12.5" cy="5" r="1.6" fill="#fff"/></svg>
<div class="t" style="left:464px;top:498px;font-size:12px;font-weight:bold;color:#4b4f56">Nuotraukos/V...</div>
<svg class="a" style="left:582px;top:493px" width="22" height="22" viewBox="0 0 22 22"><circle cx="9" cy="6.5" r="5" fill="#fff" stroke="#3578e5" stroke-width="1.5"/><path d="M1 21c0-5 3.5-8 8-8s8 3 8 8z" fill="#3578e5"/><path d="M14 7L19 5L21 8L17 11Z" fill="#a77be2"/></svg>
<div class="t" style="left:608px;top:498px;font-size:12px;font-weight:bold;color:#4b4f56">Žymėti draugus</div>
<svg class="a" style="left:726px;top:493px" width="21" height="21" viewBox="0 0 21 21"><circle cx="10.5" cy="10.5" r="10" fill="#f7b928" stroke="#f5a623"/><circle cx="7" cy="7.5" r="1.5" fill="#333"/><circle cx="14" cy="7.5" r="1.5" fill="#333"/><path d="M4.5 11h12c0 4-2.5 6.5-6 6.5s-6-2.5-6-6.5z" fill="#333"/><path d="M7 15c1-1 6-1 7 0c-1 1.5-6 1.5-7 0z" fill="#f44"/></svg>
<div class="t" style="left:752px;top:498px;font-size:12px;font-weight:bold;color:#4b4f56">Būsena/Veikla</div>
<div class="a" style="left:418px;top:528px;width:429px;height:1px;background:#dddfe2"></div>
<div class="t" style="left:805px;top:542px;font-size:13px;color:#bec3c9">✵</div>

<!-- ============ POST ============ -->
<div class="card" style="left:417px;top:581px;width:431px;height:140px"></div>
<svg class="a" style="left:430px;top:593px" width="40" height="40" viewBox="0 0 160 160"><defs><clipPath id="c430593"><circle cx="80" cy="80" r="80"/></clipPath></defs><g clip-path="url(#c430593)"><rect x="0" y="0" width="160" height="160" fill="#0b0b0b"/><use href="#pp" width="160" height="160"/></g></svg>
<div class="t" style="left:478px;top:596px;font-size:14px;font-weight:bold;color:#365899;letter-spacing:.2px">Martynas Gumbas</div>
<div class="t" style="left:478px;top:617px;font-size:12px;color:#616770;letter-spacing:.15px">Rugsėjo 4 d. ·</div>
<svg class="a" style="left:558px;top:617px" width="12" height="12" viewBox="0 0 12 12"><circle cx="6" cy="6" r="6" fill="#616770"/><path d="M2 2.5C3.5 2 4.5 3 5 4S4 6 3.5 7 4 9.5 4.5 11C3 10.5 1 9 0.7 6.5 1 4 1.5 3 2 2.5Z M6.5 0.8C8 1 9 2 8.5 3.5S7 5 8 6.5 10 7.5 11.3 7C11 9 9.5 10.5 8 11.2C8.5 10 9 9 8 8.5S6 8 6 6.5 7 5 6.5 4 5.5 1.5 6.5 0.8Z" fill="#fff"/></svg>
<div class="a" style="left:430px;top:641px;width:420px;font-size:14px;line-height:19px;color:#1d2129;white-space:nowrap">Nori padidinti pardavimus ? kartu su komanda Jūsų projektui galime<br>pilną SEO optimizaciją (auditas, vidinis ir išorinis SEO optimizavimas,<br>ataskaitos).</div>
<div class="a" style="left:430px;top:704px;width:420px;font-size:14px;line-height:19px;color:#1d2129;white-space:nowrap">‧‧ Facebook Ads reklaminių kampanijų kūrimas, priežiūra ir administravimas</div>

<!-- ============ RIGHT SIDEBAR ============ -->
<div class="a" style="left:1143px;top:114px;width:206px;height:597px;background:#e9ebee;border-left:1px solid #c9ccd1"></div>
<div class="t" style="left:1150px;top:122px;font-size:11px;font-weight:bold;color:#3b3e44">MOMENTINIAI ŽAIDIMAI</div>
<div class="t" style="left:1303px;top:137px;font-size:9px;color:#4b4f56">DAUGIAU</div>
<svg class="a" style="left:1149px;top:174px" width="8" height="13" viewBox="0 0 8 13"><path d="M7 1L1.5 6.5L7 12" fill="none" stroke="#bec2c9" stroke-width="1.8"/></svg>
<svg class="a" style="left:1336px;top:174px" width="8" height="13" viewBox="0 0 8 13"><path d="M1 1L6.5 6.5L1 12" fill="none" stroke="#bec2c9" stroke-width="1.8"/></svg>
<div class="a" style="left:1152px;top:199px;width:189px;height:1px;background:#d3d6db"></div>
<!-- game circle 1 -->
<div class="a" style="left:1164px;top:156px;width:50px;height:50px;border-radius:50%;background:radial-gradient(circle at 38% 40%,#2a1c1a 0,#160e0d 35%,#050303 65%)"></div>
<div class="a" style="left:1189px;top:179px;width:30px;height:30px;border-radius:50%;background:#fff;border:2px solid #e9ebee"></div>
<div class="a" style="left:1192px;top:182px;width:24px;height:24px;border-radius:50%;border:2px solid #111;background:#fff"></div>
<div class="a" style="left:1199px;top:188px;width:4px;height:4px;border-radius:50%;background:#111;box-shadow:7px 0 0 #111"></div>
<div class="a" style="left:1201px;top:195px;width:7px;height:7px;border-radius:50%;background:#111"></div>
<!-- game circle 2 -->
<div class="a" style="left:1222px;top:156px;width:50px;height:50px;border-radius:50%;overflow:hidden;background:linear-gradient(180deg,#2e4fd0 0,#5a7fe8 45%,#a8c4f0 75%,#d8e4f2 100%)">
  <div class="a" style="left:14px;top:24px;width:18px;height:22px;border-radius:40%;background:#1f2a3a"></div>
  <div class="a" style="left:18px;top:17px;width:9px;height:9px;border-radius:50%;background:#c9a48a"></div>
  <div class="a" style="left:20px;top:34px;width:30px;height:16px;background:#e6ebf2;transform:skewX(-30deg)"></div>
</div>
<div class="a" style="left:1247px;top:180px;width:30px;height:30px;border-radius:50%;background:#f25268;border:3px solid #e9ebee"></div>
<svg class="a" style="left:1255px;top:188px" width="14" height="13" viewBox="0 0 14 13"><path d="M7 12.5L1.5 7A3.3 3.3 0 0 1 7 2.5A3.3 3.3 0 0 1 12.5 7Z" fill="#fff"/></svg>
<!-- game circle 3 -->
<div class="a" style="left:1281px;top:156px;width:50px;height:50px;border-radius:50%;overflow:hidden;background:#fff">
  <div class="a" style="left:0;top:11px;width:50px;height:27px;background:#0d0d0d"></div>
  <div class="a" style="left:20px;top:11px;width:20px;height:26px;border-radius:45%;background:radial-gradient(circle at 60% 40%,#bbb,#555 60%,#222)"></div>
</div>
<div class="a" style="left:1306px;top:180px;width:28px;height:28px;border-radius:50%;background:linear-gradient(135deg,#7fd3ff,#6b8cff 45%,#ff7fd8);border:2px solid #e9ebee"></div>
<div class="a" style="left:1314px;top:186px;width:9px;height:16px;background:#3a55e0;opacity:.8"></div>

<div class="t" style="left:1150px;top:208px;font-size:11px;font-weight:bold;color:#3b3e44">TAVO ŽAIDIMAI</div>
<div class="t" style="left:1303px;top:223px;font-size:9px;color:#4b4f56">DAUGIAU</div>
<svg class="a" style="left:1336px;top:259px" width="8" height="13" viewBox="0 0 8 13"><path d="M1 1L6.5 6.5L1 12" fill="none" stroke="#bec2c9" stroke-width="1.8"/></svg>
<div class="a" style="left:1144px;top:284px;width:205px;height:1px;background:#d3d6db"></div>
<!-- game row 2 -->
<div class="a" style="left:1164px;top:242px;width:50px;height:50px;border-radius:50%;overflow:hidden;background:linear-gradient(180deg,#c9d4dc 0,#d9c6a0 35%,#a88a5a 60%,#5a4a4a 100%)">
  <div class="a" style="left:18px;top:20px;width:16px;height:18px;border-radius:45%;background:#c09078"></div>
  <div class="a" style="left:8px;top:36px;width:34px;height:20px;border-radius:40%;background:#3a3a5a"></div>
</div>
<div class="a" style="left:1190px;top:266px;width:28px;height:28px;border-radius:50%;background:#fff;border:2px solid #e9ebee"></div>
<svg class="a" style="left:1192px;top:268px" width="24" height="24" viewBox="0 0 24 24"><defs><clipPath id="bl"><circle cx="12" cy="12" r="11.5"/></clipPath></defs><circle cx="12" cy="12" r="11.5" fill="#fff"/><g clip-path="url(#bl)" fill="#2a2a2a"><path d="M12 4.5L17 8L15.2 13.5H8.8L7 8Z"/><path d="M-1 10L3 8.5L5 13L2 17L-1 16Z"/><path d="M25 10L21 8.5L19 13L22 17L25 16Z"/><path d="M6 26L7.5 20.5L12 19.5L16.5 20.5L18 26Z"/><path d="M8 -1L10 1.5H14L16 -1Z"/></g><circle cx="12" cy="12" r="11.5" fill="none" stroke="#ddd" stroke-width=".8"/></svg>
<div class="a" style="left:1222px;top:242px;width:50px;height:50px;border-radius:50%;overflow:hidden;background:#6ec8ec">
  <div class="a" style="left:4px;top:10px;width:42px;height:40px;border-radius:45%;background:#f08fa8"></div>
  <div class="a" style="left:6px;top:18px;width:38px;height:8px;background:#222;transform:rotate(-8deg)"></div>
  <div class="a" style="left:32px;top:32px;width:18px;height:18px;border-radius:50%;background:#f6c636"></div>
</div>
<div class="a" style="left:1223px;top:240px;width:14px;height:16px;background:#fa3e3e;border-radius:2px"></div>
<div class="t" style="left:1227px;top:243px;font-size:10px;color:#fff">1</div>
<div class="a" style="left:1281px;top:242px;width:50px;height:50px;border-radius:50%;overflow:hidden;background:radial-gradient(circle at 50% 40%,#e23a3a 0,#b81414 60%,#7a0a0a)">
  <div class="a" style="left:12px;top:10px;width:28px;height:22px;background:#fff;transform:rotate(-15deg);border-radius:2px"></div>
  <div class="a" style="left:6px;top:33px;width:40px;height:8px;background:#f2f2f2;border-radius:3px"></div>
</div>
<div class="a" style="left:1281px;top:240px;width:18px;height:16px;background:#fa3e3e;border-radius:2px"></div>
<div class="t" style="left:1283px;top:243px;font-size:10px;color:#fff">20</div>

<div class="t" style="left:1152px;top:307px;font-size:11.3px;font-weight:bold;color:#3b3e44">Jūsų puslapiai</div>
<svg class="a" style="left:1152px;top:332px" width="32" height="32" viewBox="0 0 32 32"><circle cx="16" cy="16" r="16" fill="#0a0a0a"/><circle cx="16" cy="16" r="11" fill="#2a2a2a" stroke="#ddd" stroke-width="1.2"/><circle cx="16" cy="16" r="8" fill="none" stroke="#d33" stroke-width="1.5" stroke-dasharray="1 2.2"/><rect x="9" y="14.5" width="14" height="3" fill="#bbb"/></svg>
<div class="t" style="left:1192px;top:342px;font-size:12px;color:#1d2129">Pajebat TV</div>
<div class="a" style="left:1329px;top:341px;width:11px;height:15px;background:#fff;border:1px solid #ccd0d5;border-radius:2px"></div>
<div class="t" style="left:1331px;top:343px;font-size:11px;color:#4b4f56">9</div>
<div class="a" style="left:1152px;top:372px;width:32px;height:32px;border-radius:50%;background:radial-gradient(circle at 50% 45%,#7a9ac0 0,#6a5a50 50%,#3a3a44 80%)"></div>
<div class="a" style="left:1154px;top:387px;width:28px;height:6px;background:#e6b84a"></div>
<div class="t" style="left:1192px;top:382px;font-size:12px;color:#1d2129">Lugis</div>
<div class="a" style="left:1329px;top:381px;width:11px;height:15px;background:#fff;border:1px solid #ccd0d5;border-radius:2px"></div>
<div class="t" style="left:1331px;top:383px;font-size:11px;color:#4b4f56">9</div>

<div class="t" style="left:1152px;top:419px;font-size:10.4px;font-weight:bold;color:#3b3e44">KONTAKTAI</div>
<div class="a" style="left:1152px;top:444px;width:32px;height:32px;border-radius:50%;background:linear-gradient(180deg,#a09888 0,#8a8070 50%,#3a3c3a 70%,#5a5a50 100%)"></div><div class="t" style="left:1192px;top:454px;font-size:12px;color:#1d2129">Artūras Daruliaa</div><div class="a" style="left:1330px;top:458px;width:6px;height:6px;border-radius:50%;background:#42b72a"></div><div class="a" style="left:1152px;top:484px;width:32px;height:32px;border-radius:50%;background:linear-gradient(180deg,#e8eef2 0,#9aa4aa 35%,#4a5058 60%,#2a2c30 100%)"></div><div class="t" style="left:1192px;top:494px;font-size:12px;color:#1d2129">Gabrielė Navickaitė</div><div class="a" style="left:1330px;top:498px;width:6px;height:6px;border-radius:50%;background:#42b72a"></div><div class="a" style="left:1152px;top:524px;width:32px;height:32px;border-radius:50%;background:radial-gradient(ellipse 60% 35% at 50% 35%,#f0f0f0 0,#ddd 50%,#222 100%),#111"></div><div class="t" style="left:1192px;top:534px;font-size:12px;color:#1d2129">Austeja Vinikaite</div><div class="a" style="left:1330px;top:538px;width:6px;height:6px;border-radius:50%;background:#42b72a"></div><div class="a" style="left:1152px;top:564px;width:32px;height:32px;border-radius:50%;background:linear-gradient(160deg,#8a7260 0,#a08068 40%,#c89070 55%,#262630 75%)"></div><div class="t" style="left:1192px;top:574px;font-size:12px;color:#1d2129">Asti Jus</div><div class="a" style="left:1330px;top:578px;width:6px;height:6px;border-radius:50%;background:#42b72a"></div><div class="a" style="left:1152px;top:604px;width:32px;height:32px;border-radius:50%;background:linear-gradient(180deg,#d8e0e8 0,#c8b48a 35%,#8a6a4a 55%,#4a3a6a 85%)"></div><div class="t" style="left:1192px;top:614px;font-size:12px;color:#1d2129">Vakaris Kuprijano...</div><div class="t" style="left:1308px;top:614px;font-size:11px;color:#90949c">2 min.</div>
<div class="t" style="left:1152px;top:651px;font-size:10.4px;font-weight:bold;color:#3b3e44">GRUPIŲ POKALBIAI</div>
<div class="a" style="left:1152px;top:677px;width:32px;height:32px;border-radius:50%;background:#222"></div>
<div class="a" style="left:1296px;top:677px;width:10px;height:10px;border-radius:50%;background:#f7b928"></div>
<!-- sidebar search -->
<div class="a" style="left:1145px;top:680px;width:203px;height:31px;background:#f6f7f9;border-top:1px solid #dddfe2;border-radius:6px 6px 0 0"></div>
<svg class="a" style="left:1152px;top:687px" width="15" height="15" viewBox="0 0 15 15"><circle cx="6" cy="6" r="4.8" fill="none" stroke="#bec3c9" stroke-width="1.4"/><path d="M9.5 9.5L14 14" stroke="#bec3c9" stroke-width="1.6"/></svg>
<div class="t" style="left:1172px;top:688px;font-size:14px;color:#90949c">Paieška</div>
<svg class="a" style="left:1276px;top:686px" width="16" height="16" viewBox="0 0 16 16"><circle cx="8" cy="8" r="6" fill="none" stroke="#bec3c9" stroke-width="4" stroke-dasharray="2.9 1.81" stroke-dashoffset="1.45"/><circle cx="8" cy="8" r="5.6" fill="#bec3c9"/><circle cx="8" cy="8" r="2.3" fill="#f6f7f9"/></svg>
<svg class="a" style="left:1300px;top:686px" width="16" height="16" viewBox="0 0 16 16"><path d="M13 9v5.5H1.5V3H7" fill="none" stroke="#bec3c9" stroke-width="1.6"/><path d="M6 10l1-3 6.5-6.5 2 2L9 9z" fill="#bec3c9"/></svg>
<svg class="a" style="left:1323px;top:686px" width="18" height="16" viewBox="0 0 18 16"><circle cx="6" cy="4.5" r="3.5" fill="#bec3c9"/><circle cx="13" cy="5" r="3" fill="#bec3c9"/><path d="M0 14c0-4 2.5-6 6-6s6 2 6 6z" fill="#bec3c9"/><path d="M10 9c4 0 7 1 7 5h-4z" fill="#bec3c9"/></svg>

<!-- ============ CHAT WINDOW ============ -->
<div class="a" style="left:832px;top:359px;width:286px;height:360px;border-radius:7px 7px 0 0;background:rgba(0,0,0,.10)"></div>
<div class="a" style="left:833px;top:360px;width:284px;height:360px;border-radius:6px 6px 0 0;background:#fff"></div>
<div class="a" style="left:833px;top:403px;width:284px;height:1px;background:#dddfe2"></div>
<svg class="a" style="left:841px;top:368px" width="28" height="28" viewBox="0 0 160 160"><defs><clipPath id="c841368"><circle cx="80" cy="80" r="80"/></clipPath></defs><g clip-path="url(#c841368)"><rect x="0" y="0" width="160" height="160" fill="#0b0b0b"/><use href="#pp" width="160" height="160"/></g></svg>
<div class="a" style="left:860px;top:387px;width:9px;height:9px;border-radius:50%;background:#42b72a;border:1.5px solid #fff"></div>
<div class="t" style="left:878px;top:370px;font-size:13px;font-weight:bold;color:#1d2129">Martynas Gumbas</div>
<div class="t" style="left:878px;top:385px;font-size:12px;color:#90949c">Active now</div>
<svg class="a" style="left:1063px;top:375px" width="16" height="16" viewBox="0 0 16 16"><circle cx="8" cy="8" r="6" fill="none" stroke="#bec3c9" stroke-width="4" stroke-dasharray="2.9 1.81" stroke-dashoffset="1.45"/><circle cx="8" cy="8" r="5.6" fill="#bec3c9"/><circle cx="8" cy="8" r="2.3" fill="#fff"/></svg>
<svg class="a" style="left:1092px;top:376px" width="14" height="14" viewBox="0 0 14 14"><path d="M1 1L13 13M13 1L1 13" stroke="#bec3c9" stroke-width="1.6"/></svg>
<!-- messages clip -->
<div class="a" style="left:833px;top:404px;width:267px;height:245px;overflow:hidden">
  <div class="a" style="left:85px;top:-30px;width:164px;height:55px;border-radius:18px 18px 4px 18px;background:#0099ff"></div>
  <div class="t" style="left:95px;top:-10px;font-size:13px;color:#fff">nes nuo pasei kutimai</div>
  <div class="t" style="left:95px;top:5px;font-size:13px;color:#fff">kai grupes išrinksiu</div>
  <div class="a" style="left:191px;top:26px;width:58px;height:28px;border-radius:14px 4px 14px 14px;background:#0099ff"></div>
  <div class="t" style="left:201px;top:33px;font-size:13px;color:#fff">Tinka?</div>
  <div class="a" style="left:42px;top:62px;width:155px;height:59px;border-radius:18px 18px 18px 4px;background:#f1f0f0"></div>
  <div class="t" style="left:52px;top:70px;font-size:13px;line-height:16px;color:#3d4147;white-space:normal;width:140px">tai per forumus ir<br>grupes imesk po vieną<br>kartą</div>
  <div class="a" style="left:42px;top:123px;width:82px;height:28px;border-radius:4px 14px 14px 4px;background:#f1f0f0"></div>
  <div class="t" style="left:52px;top:130px;font-size:13px;color:#3d4147">ir pervesim</div>
  <div class="a" style="left:42px;top:152px;width:156px;height:44px;border-radius:4px 18px 18px 4px;background:#f1f0f0"></div>
  <div class="t" style="left:52px;top:160px;font-size:13px;line-height:16px;color:#3d4147">nes čia taip iš oro vest,<br>tai pats supranti</div>
  <div class="a" style="left:42px;top:197px;width:116px;height:44px;border-radius:4px 18px 18px 18px;background:#f1f0f0"></div>
  <div class="t" style="left:52px;top:205px;font-size:13px;line-height:16px;color:#3d4147">tu užtruksi man<br>dvidešimt min</div>
  <svg class="a" style="left:8px;top:213px" width="28" height="28" viewBox="0 0 160 160"><defs><clipPath id="c8213"><circle cx="80" cy="80" r="80"/></clipPath></defs><g clip-path="url(#c8213)"><rect x="0" y="0" width="160" height="160" fill="#0b0b0b"/><use href="#pp" width="160" height="160"/></g></svg>
</div>
<!-- chat scrollbar -->
<div class="a" style="left:1100px;top:404px;width:17px;height:245px;background:#f1f1f1"></div>
<svg class="a" style="left:1105px;top:409px" width="7" height="5" viewBox="0 0 7 5"><path d="M0 4.5L3.5 0.5L7 4.5Z" fill="#505050"/></svg>
<svg class="a" style="left:1105px;top:638px" width="7" height="5" viewBox="0 0 7 5"><path d="M0 0.5L3.5 4.5L7 0.5Z" fill="#505050"/></svg>
<div class="a" style="left:1102px;top:486px;width:13px;height:17px;background:#c1c1c1"></div>
<div class="a" style="left:833px;top:649px;width:284px;height:1px;background:#dddfe2"></div>
<div class="t" style="left:841px;top:662px;font-size:13px;color:#90949c">Rašykite žinutę...</div>

<svg class="a" style="left:843px;top:686px" width="17" height="16" viewBox="0 0 17 16"><rect x="3" y="0.5" width="13.5" height="13.5" rx="1" fill="#bec3c9"/><path d="M1 3v12.5h12" fill="none" stroke="#bec3c9" stroke-width="1.6"/><path d="M5 11L8.5 6.5L11 9L13 7L15 10V12H5Z" fill="#fff"/><circle cx="12" cy="4" r="1.3" fill="#fff"/></svg>
<svg class="a" style="left:871px;top:685px" width="17" height="17" viewBox="0 0 17 17"><path d="M1 1.5h14.5v9c-3 0-5 2-5 5.5H3a2 2 0 0 1-2-2z" fill="#bec3c9"/><path d="M10.5 16c0-3.5 2-5.5 5-5.5" fill="none" stroke="#bec3c9" stroke-width="1.5"/><circle cx="5.5" cy="6" r="1.3" fill="#fff"/><circle cx="10.5" cy="6" r="1.3" fill="#fff"/><path d="M4 9.5c1.5 2 5.5 2 7 0" fill="none" stroke="#fff" stroke-width="1.3"/></svg>
<div class="a" style="left:899px;top:687px;width:16px;height:14px;border-radius:4px;background:#bec3c9"></div>
<div class="t" style="left:900px;top:689px;font-size:10px;font-weight:bold;color:#fff;transform:scaleX(.78);transform-origin:0 0;letter-spacing:-.3px">GIF</div>
<div class="a" style="left:927px;top:686px;width:16px;height:16px;border-radius:50%;background:#bec3c9"></div>
<div class="a" style="left:931px;top:690px;width:2px;height:3px;background:#fff;box-shadow:6px 0 0 #fff"></div>
<svg class="a" style="left:930px;top:694px" width="10" height="5" viewBox="0 0 10 5"><path d="M1 1c2 3 6 3 8 0" fill="none" stroke="#fff" stroke-width="1.4"/></svg>
<svg class="a" style="left:954px;top:685px" width="18" height="18" viewBox="0 0 18 18"><path d="M4.5 13.5L13.5 4.5" stroke="#bec3c9" stroke-width="6" stroke-linecap="round"/><circle cx="4.3" cy="13.7" r="4.3" fill="#bec3c9"/><circle cx="13.7" cy="4.3" r="4.3" fill="#bec3c9"/><path d="M3 12.4l2.6 2.6M5.6 12.4L3 15" stroke="#fff" stroke-width="1"/><circle cx="13" cy="2.8" r=".75" fill="#fff"/><circle cx="15.2" cy="2.8" r=".75" fill="#fff"/><circle cx="13" cy="5" r=".75" fill="#fff"/><circle cx="15.2" cy="5" r=".75" fill="#fff"/></svg>
<svg class="a" style="left:982px;top:685px" width="18" height="18" viewBox="0 0 18 18"><path d="M6 12.5l6.5-6.5a1.6 1.6 0 0 0-2.3-2.3L3.3 10.6a3.2 3.2 0 0 0 4.5 4.5l7-7a4.8 4.8 0 0 0-6.8-6.8L2.5 6.8" fill="none" stroke="#bec3c9" stroke-width="1.3"/></svg>
<svg class="a" style="left:1010px;top:686px" width="18" height="16" viewBox="0 0 18 16"><path d="M1 4h3.5l2-3h5l2 3H17v11H1z" fill="#bec3c9"/><circle cx="9" cy="9" r="3.4" fill="#fff"/><circle cx="9" cy="9" r="2" fill="#bec3c9"/></svg>
<svg class="a" style="left:1090px;top:685px" width="18" height="17" viewBox="0 0 18 17"><rect x="1" y="7" width="4" height="9.5" fill="#bec3c9"/><path d="M6.5 7L10 1.5c1.5-.5 2.5.5 2 2.3L11 6.5h5a1.6 1.6 0 0 1 1.4 2l-1.6 6.5a2 2 0 0 1-2 1.5H6.5z" fill="#bec3c9"/></svg>


<div id="vscroll" class="a"></div>
<svg class="a" style="left:1353px;top:77px" width="9" height="5" viewBox="0 0 9 5"><path d="M0 5L4.5 0L9 5Z" fill="#a3a3a3"/></svg>
<div class="a" style="left:1351px;top:88px;width:13px;height:39px;background:#c1c1c1"></div>
<svg class="a" style="left:1352px;top:699px" width="9" height="5" viewBox="0 0 9 5"><path d="M0 0L4.5 5L9 0Z" fill="#505050"/></svg>
<div id="hscroll" class="a"></div>
<svg class="a" style="left:6px;top:715px" width="5" height="9" viewBox="0 0 5 9"><path d="M5 0L0 4.5L5 9Z" fill="#a3a3a3"/></svg>
<svg class="a" style="left:1339px;top:715px" width="5" height="9" viewBox="0 0 5 9"><path d="M0 0L5 4.5L0 9Z" fill="#a3a3a3"/></svg>
<div class="a" style="left:1349px;top:711px;width:17px;height:17px;background:#dcdcdc"></div>

<!-- ============ TASKBAR ============ -->
<div id="taskbar" class="a"></div>
<svg class="a" style="left:16px;top:740px" width="17" height="17" viewBox="0 0 17 17"><path d="M0 2.4L7 1.4V8H0z M8 1.3L17 0V8H8z M0 9h7v6.6L0 14.6z M8 9h9v8L8 15.7z" fill="#fff"/></svg>
<div class="a" style="left:48px;top:728px;width:343px;height:40px;background:#f0f0f0;border-top:1px solid #dcdcdc"></div>
<svg class="a" style="left:60px;top:739px" width="17" height="17" viewBox="0 0 17 17"><circle cx="10.5" cy="6.5" r="5.5" fill="none" stroke="#222" stroke-width="1.2"/><path d="M6.5 10.5L0.8 16.2" stroke="#222" stroke-width="1.4"/></svg>
<div class="t" style="left:88px;top:742px;font-size:13.5px;color:#222">Įveskite čia, ko ieškoti</div>
<!-- task view -->
<svg class="a" style="left:407px;top:739px" width="18" height="18" viewBox="0 0 18 18"><rect x="2.5" y="4.5" width="11" height="9" fill="none" stroke="#fff" stroke-width="1.1"/><path d="M0 2h16M0 16h16M16 4.5v1.5M16 8v1.5M16 11.5v1.5" stroke="#fff" stroke-width="1.1"/></svg>
<!-- explorer -->
<svg class="a" style="left:455px;top:738px" width="22" height="20" viewBox="0 0 22 20"><path d="M0 2h8l2 2h12v15H0z" fill="#e8a92a"/><path d="M0 6h22v13H0z" fill="#f7c948"/><rect x="6" y="10" width="10" height="7" fill="#2b7bd1"/><rect x="8" y="14" width="6" height="5" fill="#f7c948"/></svg>
<!-- store -->
<svg class="a" style="left:505px;top:736px" width="20" height="22" viewBox="0 0 20 22"><path d="M6 6V4a4 4 0 0 1 8 0v2" fill="none" stroke="#fff" stroke-width="1.5"/><rect x="0" y="6" width="20" height="16" fill="#fff"/><rect x="5" y="9" width="4.5" height="4.5" fill="#f25022"/><rect x="10.5" y="9" width="4.5" height="4.5" fill="#7fba00"/><rect x="5" y="14.5" width="4.5" height="4.5" fill="#00a4ef"/><rect x="10.5" y="14.5" width="4.5" height="4.5" fill="#ffb900"/></svg>
<!-- media -->
<svg class="a" style="left:553px;top:737px" width="20" height="21" viewBox="0 0 20 21"><rect x="0" y="2" width="20" height="19" fill="#5a8fc0"/><rect x="2" y="0" width="16" height="4" fill="#9cc0e0"/><circle cx="10" cy="11.5" r="6.5" fill="#f08a1c"/><path d="M8 8v7l5.5-3.5z" fill="#fff"/></svg>
<!-- mail -->
<svg class="a" style="left:601px;top:739px" width="25" height="17" viewBox="0 0 25 17"><path d="M0 6L12.5 0L25 6V17H0z" fill="#fff"/><path d="M0 6L12.5 13L25 6" fill="none" stroke="#222" stroke-width="1.4"/><path d="M12 17L25 9" stroke="#222" stroke-width="1.2"/></svg>
<!-- doc -->
<svg class="a" style="left:655px;top:737px" width="16" height="21" viewBox="0 0 16 21"><path d="M0 0h11l5 5v16H0z" fill="#f4f4f4"/><path d="M11 0v5h5" fill="#d0d0d0"/></svg>
<!-- word -->
<svg class="a" style="left:699px;top:736px" width="24" height="23" viewBox="0 0 24 23"><rect x="2" y="1" width="20" height="21" fill="#fff"/><rect x="0" y="3" width="14" height="15" fill="#2b579a"/><text x="1" y="15" font-family="Liberation Sans" font-weight="bold" font-size="12" fill="#fff">W</text><path d="M15 7h6M15 10h6M15 13h6M15 16h6" stroke="#2b579a" stroke-width="1"/></svg>
<!-- skype -->
<div class="a" style="left:750px;top:737px;width:22px;height:22px;border-radius:50%;background:#00aff0"></div>
<div class="t" style="left:755px;top:740px;font-size:17px;font-weight:bold;color:#fff">S</div>
<!-- edge -->
<div class="t" style="left:798px;top:731px;font-size:30px;font-weight:bold;color:#0a78d7;font-family:'Liberation Sans'">e</div>
<!-- another -->
<svg class="a" style="left:846px;top:740px" width="26" height="15" viewBox="0 0 26 15"><path d="M6 0h20v15H6L0 7.5z" fill="#fff"/><path d="M4 2h7v3H4z" fill="#202020"/></svg>
<!-- chrome active -->
<div class="a" style="left:884px;top:728px;width:160px;height:40px;background:#484848"></div>
<div class="a" style="left:884px;top:766px;width:160px;height:2px;background:#76b9ed"></div>
<div class="a" style="left:895px;top:737px;width:22px;height:22px;border-radius:50%;background:conic-gradient(from -60deg,#db4437 0 120deg,#f4c20d 120deg 240deg,#0f9d58 240deg 360deg)"></div>
<div class="a" style="left:900px;top:742px;width:12px;height:12px;border-radius:50%;background:#4285f4;border:2px solid #fff"></div>
<div class="t" style="left:922px;top:742px;font-size:12px;color:#fff">Martynas Gumbas–...</div>
<!-- tray -->
<svg class="a" style="left:1120px;top:744px" width="13" height="8" viewBox="0 0 13 8"><path d="M0.5 7.5L6.5 1.5L12.5 7.5" fill="none" stroke="#fff" stroke-width="1.2"/></svg>
<svg class="a" style="left:1145px;top:741px" width="16" height="14" viewBox="0 0 16 14"><path d="M1 13A12 12 0 0 1 13 1M4 13A9 9 0 0 1 13 4M7 13A6 6 0 0 1 13 7M10 13A3 3 0 0 1 13 10" fill="none" stroke="#fff" stroke-width="1.1"/></svg>
<div class="a" style="left:1167px;top:740px;width:16px;height:16px;border-radius:50%;background:#f25a0f"></div>
<div class="t" style="left:1173px;top:742px;font-size:12px;font-weight:bold;color:#fff">!</div>
<svg class="a" style="left:1189px;top:740px" width="18" height="16" viewBox="0 0 18 16"><path d="M1 5h3l4-4v14l-4-4H1z" fill="none" stroke="#fff" stroke-width="1.1"/><path d="M11 5a4 4 0 0 1 0 6M13.5 3a7 7 0 0 1 0 10M16 1a10 10 0 0 1 0 14" fill="none" stroke="#fff" stroke-width="1"/></svg>
<div class="t" style="left:1221px;top:742px;font-size:12px;color:#fff">LIT</div>
<div class="t" style="left:1266px;top:733px;font-size:11.5px;color:#fff">21:57</div>
<div class="t" style="left:1253px;top:751px;font-size:11px;color:#fff">2019.12.21</div>
<svg class="a" style="left:1324px;top:738px" width="20" height="18" viewBox="0 0 20 18"><path d="M0.5 0.5h17v11h-11l-4 4v-4h-2z" fill="#fff"/><path d="M3 3.5h12M3 6h12M3 8.5h12" stroke="#202020" stroke-width="1"/></svg>
<div class="a" style="left:1332px;top:747px;width:17px;height:17px;border-radius:50%;background:#202020;border:1px solid #aaa"></div>
<div class="t" style="left:1334px;top:751px;font-size:10px;font-weight:bold;color:#fff;letter-spacing:-.5px">10</div>
</body></html>
